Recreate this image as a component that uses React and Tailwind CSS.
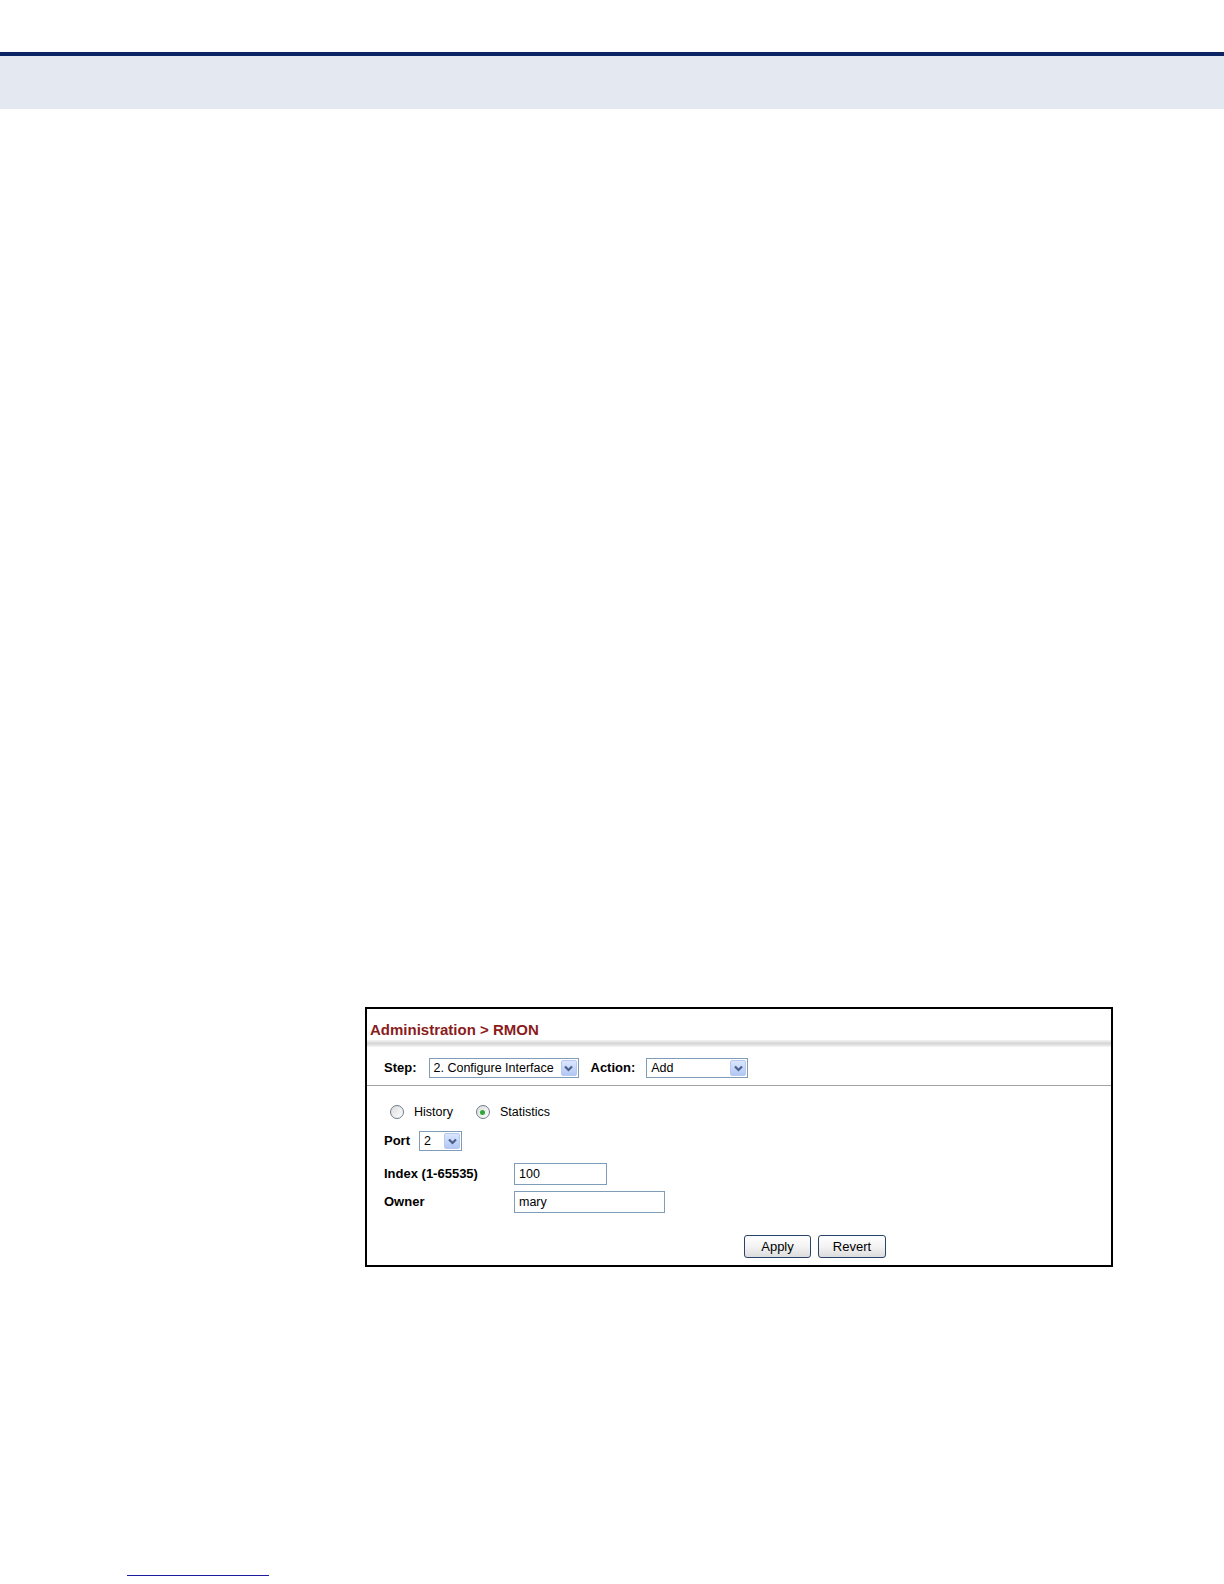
import React from 'react'

const font = { fontFamily: '"Liberation Sans", Arial, sans-serif' }

function Arrow() {
  return (
    <span className="flex h-[16px] w-[16px] items-center justify-center rounded-[2px] border border-[#b8c9ef] bg-gradient-to-b from-[#dbe6fd] to-[#b3c7f5]">
      <svg width="9" height="7" viewBox="0 0 9 7">
        <polyline points="1,1.5 4.5,5 8,1.5" fill="none" stroke="#4a5f8a" strokeWidth="2.2" />
      </svg>
    </span>
  )
}

function Select({ value, className }) {
  return (
    <div className={`flex h-[20px] items-center justify-between border border-[#7f9db9] bg-white pl-[4px] pr-[1px] text-[12.5px] text-black ${className}`}>
      <span className="leading-none">{value}</span>
      <Arrow />
    </div>
  )
}

function Radio({ checked, label }) {
  return (
    <div className="flex items-center">
      <span className="flex h-[14px] w-[14px] items-center justify-center rounded-full border border-[#6b7a8c] bg-gradient-to-br from-[#dcdcdc] to-white">
        {checked && <span className="h-[5px] w-[5px] rounded-full bg-[#2fa83a]" />}
      </span>
      <span className="ml-[10px] text-[12.5px] leading-none text-black">{label}</span>
    </div>
  )
}

function Field({ label, value, width }) {
  return (
    <div className="flex items-center">
      <span className="w-[130px] text-[13px] font-bold text-black">{label}</span>
      <div className={`flex h-[22px] items-center border border-[#7f9db9] bg-white px-[4px] text-[12.5px] text-black ${width}`}>
        {value}
      </div>
    </div>
  )
}

function Button({ children, width }) {
  return (
    <button className={`flex h-[23px] items-center justify-center rounded-[3px] border border-[#29456b] bg-gradient-to-b from-white via-[#f3f3f3] to-[#dcdcdc] text-[13px] text-black ${width}`}>
      {children}
    </button>
  )
}

export default function App() {
  return (
    <div className="w-full bg-white pb-[8px]" style={font}>
      <div className="mt-[52px] h-[4px] bg-[#0b2463]" />
      <div className="h-[53px] bg-[#e4e8f0]" />

      <div className="ml-[365px] mt-[898px] h-[260px] w-[748px] border-2 border-black">
        <div className="pl-[3px] pt-[11px] text-[15px] font-bold leading-[20px] text-[#8a1c1c]">
          Administration &gt; RMON
        </div>
        <div className="h-[7px] bg-gradient-to-b from-[#f4f4f4] via-[#d5d5d5] to-[#f6f6f6]" />

        <div className="mt-[11px] flex h-[20px] items-center pl-[17px]">
          <span className="text-[13px] font-bold text-black">Step:</span>
          <Select value="2. Configure Interface" className="ml-[12px] w-[150px]" />
          <span className="ml-[12px] text-[13px] font-bold text-black">Action:</span>
          <Select value="Add" className="ml-[11px] w-[102px]" />
        </div>
        <div className="mt-[7px] h-px bg-[#a3a3a3]" />

        <div className="pl-[17px]">
          <div className="ml-[6px] mt-[18px] flex h-[16px] items-center gap-[23px]">
            <Radio label="History" />
            <Radio checked label="Statistics" />
          </div>

          <div className="mt-[11px] flex h-[20px] items-center">
            <span className="text-[13px] font-bold text-black">Port</span>
            <Select value="2" className="ml-[9px] w-[43px]" />
          </div>

          <div className="mt-[12px] flex flex-col gap-[6px]">
            <Field label="Index (1-65535)" value="100" width="w-[93px]" />
            <Field label="Owner" value="mary" width="w-[151px]" />
          </div>

          <div className="ml-[360px] mt-[22px] flex gap-[7px]">
            <Button width="w-[67px]">Apply</Button>
            <Button width="w-[68px]">Revert</Button>
          </div>
        </div>
      </div>

      <div className="ml-[127px] mt-[308px] h-px w-[142px] bg-[#1c1c9c]" />
    </div>
  )
}
